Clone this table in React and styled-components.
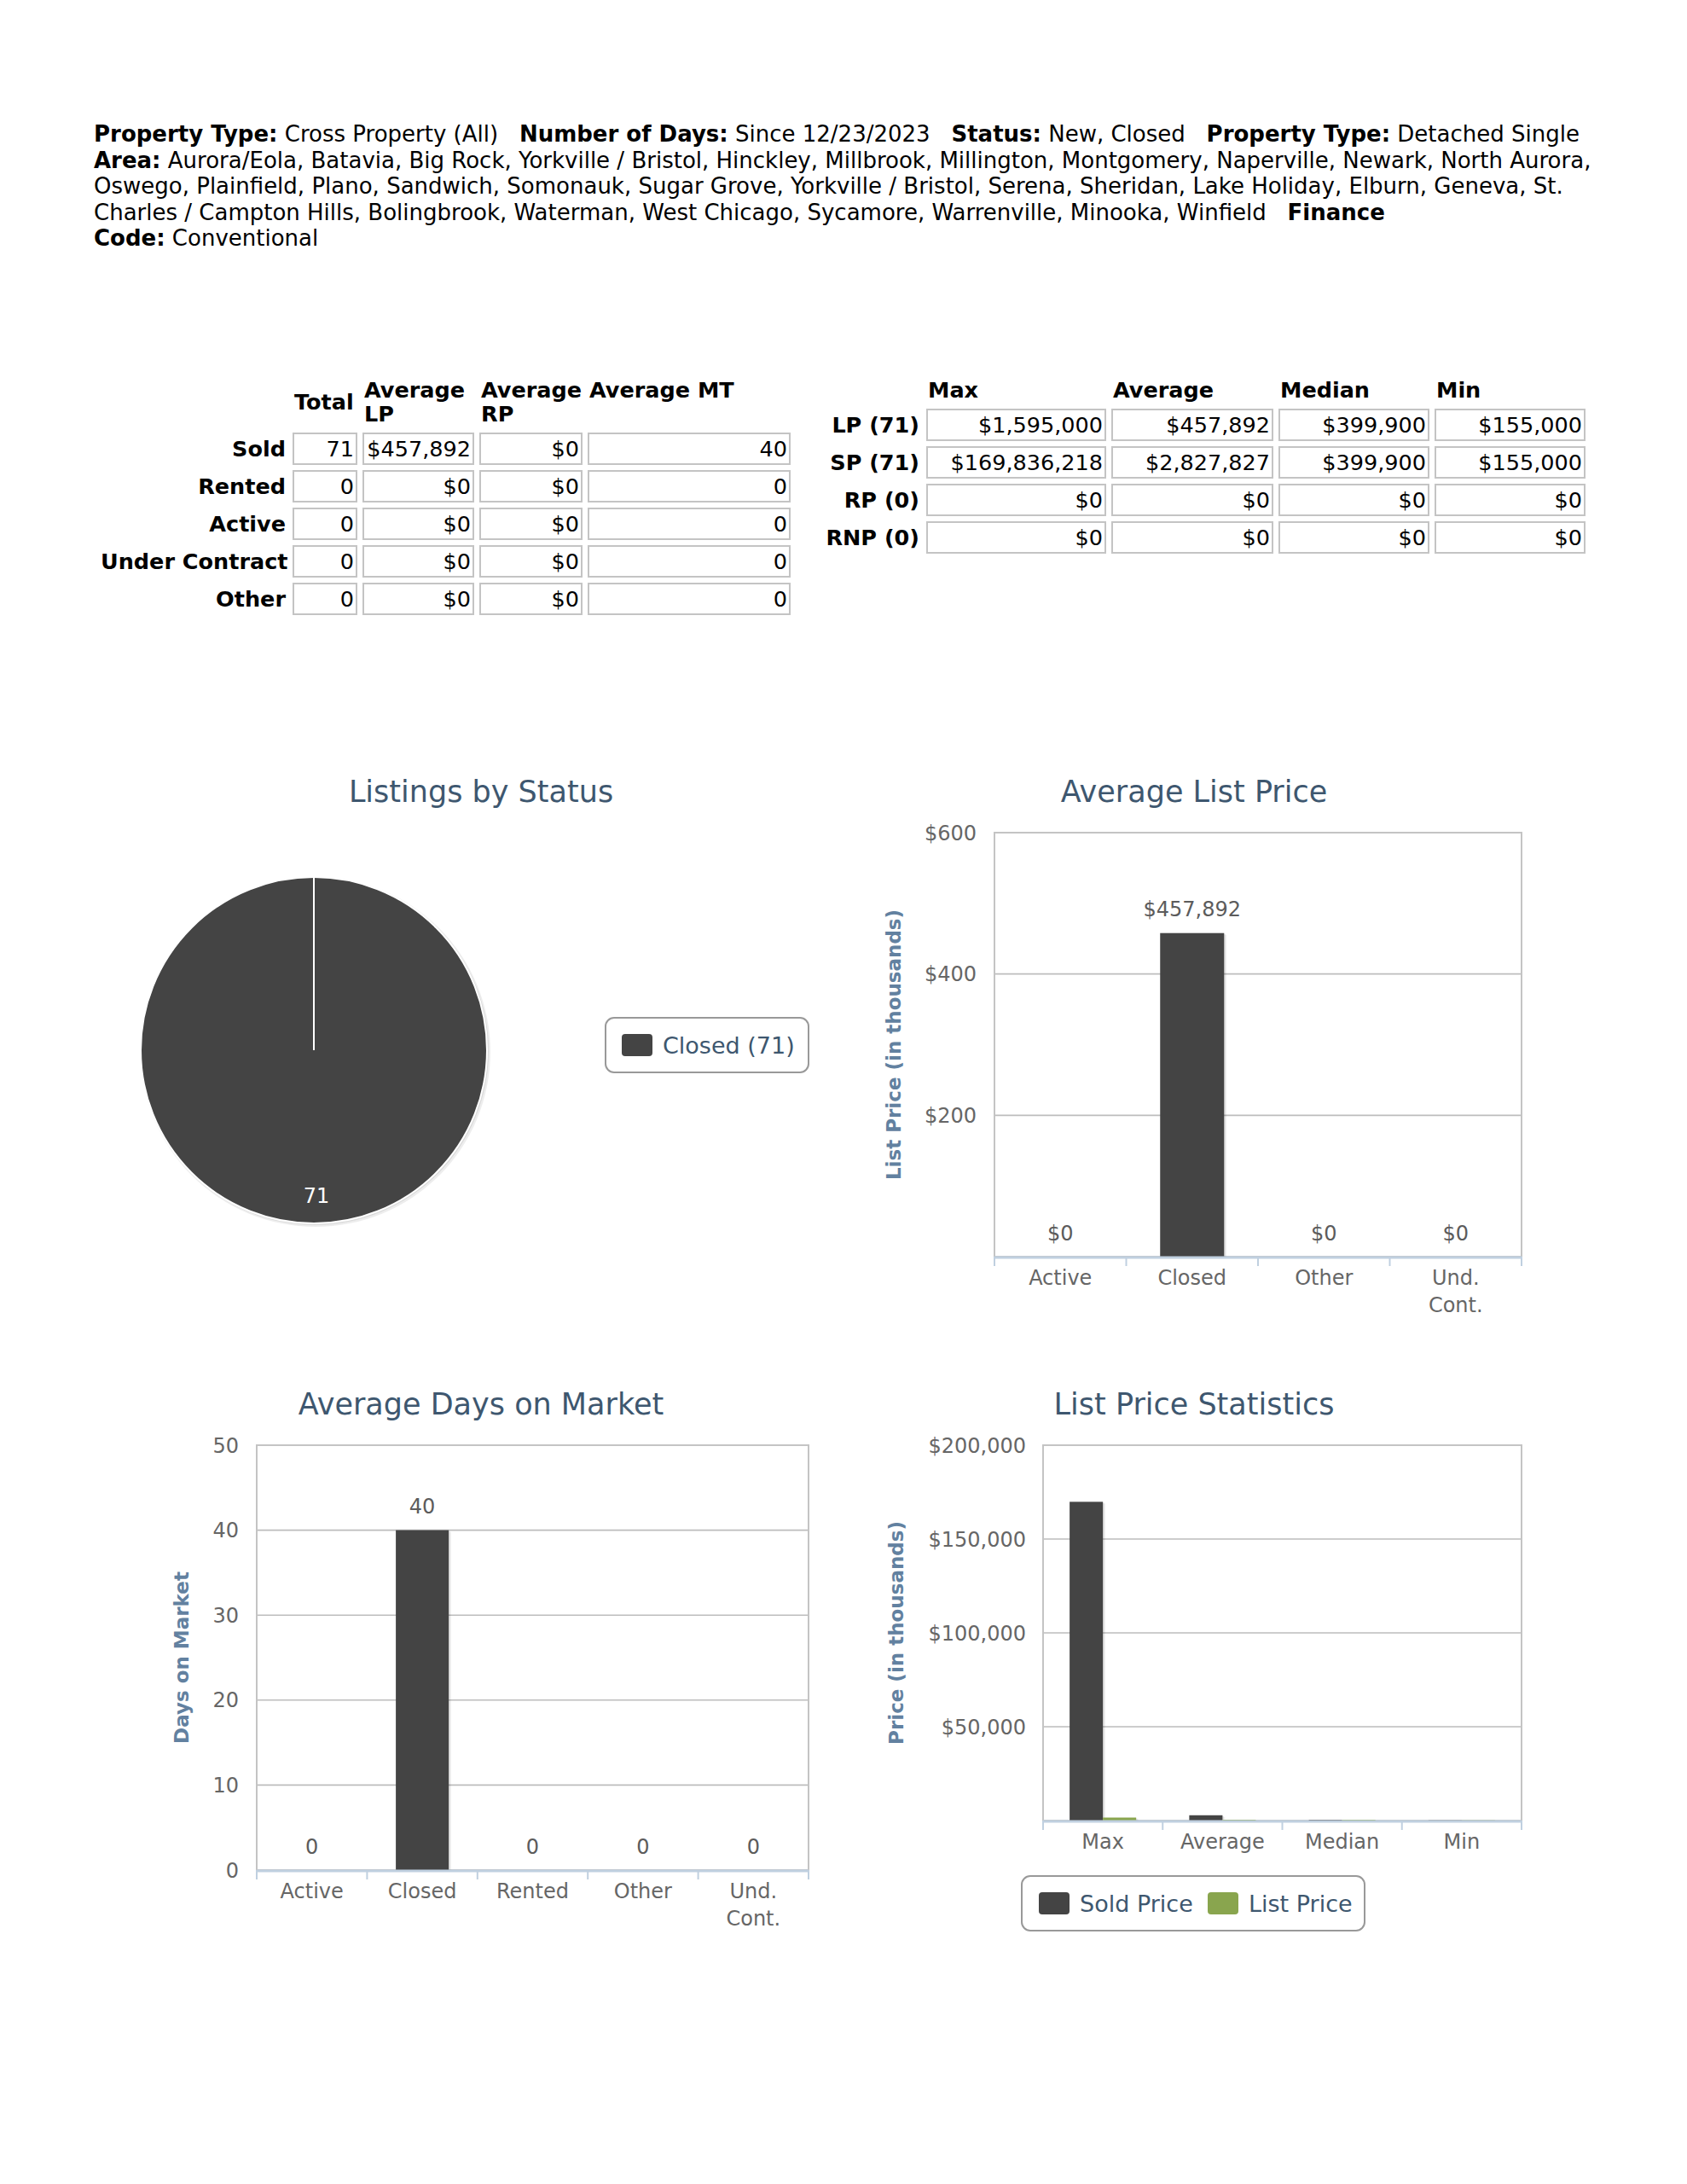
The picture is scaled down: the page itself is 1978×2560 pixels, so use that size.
import React from "react";
import styled, { createGlobalStyle } from "styled-components";

const GlobalStyle = createGlobalStyle`
  * { box-sizing: border-box; }
  html, body { margin: 0; padding: 0; background: #fff; }
  body { font-family: "DejaVu Sans", Verdana, sans-serif; color: #000; }
`;

const Page = styled.div`
  width: 1978px;
  min-height: 2560px;
  padding: 142px 0 0 110px;
`;

const Criteria = styled.p`
  margin: 0;
  width: 1762px;
  font-size: 26px;
  line-height: 30.5px;
`;

const Label = styled.b`
  font-weight: bold;
`;

const TablesRow = styled.div`
  display: flex;
  align-items: flex-start;
  gap: 17px;
  margin-top: 141px;
`;

const StatTable = styled.table`
  table-layout: fixed;
  border-collapse: separate;
  border-spacing: 6px;
  width: ${(p) => p.$width}px;
  font-size: 25.5px;
  line-height: 28px;
`;

const Col = styled.col`
  width: ${(p) => p.$w}px;
`;

const HeadCell = styled.th`
  padding: 1px 2px 2px;
  text-align: left;
  vertical-align: ${(p) => (p.$top ? "top" : "middle")};
  font-weight: bold;
`;

const RowLabel = styled.th`
  padding: 0 2px;
  text-align: right;
  vertical-align: middle;
  font-weight: bold;
  white-space: nowrap;
`;

const ValueCell = styled.td`
  height: 38px;
  padding: 3px 2px 3px 1px;
  border: 2px solid #c4c4c4;
  text-align: right;
  vertical-align: middle;
  white-space: nowrap;
`;

const ChartGrid = styled.div`
  display: grid;
  grid-template-columns: 840px 840px;
  grid-auto-rows: 718px;
  column-gap: 20px;
  margin: 153px 0 0 20px;
`;

const Svg = styled.svg`
  display: block;
  font-family: "DejaVu Sans", Verdana, sans-serif;
`;

const TitleText = styled.text`
  font-size: 35px;
  fill: #3e576f;
  text-anchor: middle;
`;

const AxisLabel = styled.text`
  font-size: 24px;
  fill: #666;
  text-anchor: ${(p) => p.$anchor || "middle"};
`;

const AxisTitle = styled.text`
  font-size: 23px;
  font-weight: bold;
  fill: #6281a0;
  text-anchor: middle;
`;

const DataLabel = styled.text`
  font-size: 24px;
  fill: ${(p) => p.$color || "#5c5c5c"};
  text-anchor: middle;
`;

const LegendText = styled.text`
  font-size: 27px;
  fill: #3e576f;
`;

const SEP = "\u00a0\u00a0 ";

const AREAS =
  "Aurora/Eola, Batavia, Big Rock, Yorkville / Bristol, Hinckley, Millbrook, Millington, Montgomery, Naperville, Newark, North Aurora, Oswego, Plainfield, Plano, Sandwich, Somonauk, Sugar Grove, Yorkville / Bristol, Serena, Sheridan, Lake Holiday, Elburn, Geneva, St. Charles / Campton Hills, Bolingbrook, Waterman, West Chicago, Sycamore, Warrenville, Minooka, Winfield";

const Field = ({ label, value }) => (
  <>
    <Label>{label}</Label>
    {"\u00a0" + value}
  </>
);

const statusRows = [
  ["Sold", "71", "$457,892", "$0", "40"],
  ["Rented", "0", "$0", "$0", "0"],
  ["Active", "0", "$0", "$0", "0"],
  ["Under Contract", "0", "$0", "$0", "0"],
  ["Other", "0", "$0", "$0", "0"],
];

const priceRows = [
  ["LP (71)", "$1,595,000", "$457,892", "$399,900", "$155,000"],
  ["SP (71)", "$169,836,218", "$2,827,827", "$399,900", "$155,000"],
  ["RP (0)", "$0", "$0", "$0", "$0"],
  ["RNP (0)", "$0", "$0", "$0", "$0"],
];

function Legend({ x, y, w, items }) {
  return (
    <g>
      <rect x={x} y={y} width={w} height={64} rx={10} fill="#fff" stroke="#999" strokeWidth="2" />
      {items.map((it) => (
        <g key={it.label}>
          <rect x={it.x} y={y + 19} width={36} height={26} rx={4} fill={it.color} />
          <LegendText x={it.x + 48} y={y + 42}>
            {it.label}
          </LegendText>
        </g>
      ))}
    </g>
  );
}

function PieChart() {
  const cx = 238;
  const cy = 351;
  const r = 203;
  return (
    <Svg width="840" height="718" viewBox="0 0 840 718">
      <TitleText x={434} y={60}>
        Listings by Status
      </TitleText>
      <circle cx={cx + 2} cy={cy + 2} r={r + 2} fill="#000" opacity="0.07" />
      <circle cx={cx + 1} cy={cy + 1} r={r + 1} fill="#000" opacity="0.08" />
      <circle cx={cx} cy={cy} r={r} fill="#444" stroke="#fff" strokeWidth="2" />
      <line x1={cx} y1={cy} x2={cx} y2={cy - r} stroke="#fff" strokeWidth="2" />
      <DataLabel $color="#fff" x={241} y={530}>
        71
      </DataLabel>
      <Legend x={580} y={313} w={238} items={[{ x: 599, color: "#444", label: "Closed (71)" }]} />
    </Svg>
  );
}

function BarChart({ title, titleX, plot, max, ticks, labelX, categories, series, barWidth, yTitle, yTitleX, legend }) {
  const catW = plot.w / categories.length;
  const bottom = plot.y + plot.h;
  const yOf = (v) => bottom - (v / max) * plot.h;
  const midY = plot.y + plot.h / 2;
  return (
    <Svg width="840" height="718" viewBox="0 0 840 718">
      <TitleText x={titleX} y={60}>
        {title}
      </TitleText>
      {ticks.map((t) => (
        <line key={t.v} x1={plot.x} x2={plot.x + plot.w} y1={yOf(t.v)} y2={yOf(t.v)} stroke="#bdbdbd" strokeWidth="1.6" />
      ))}
      <rect x={plot.x} y={plot.y} width={plot.w} height={plot.h} fill="none" stroke="#c4c4c4" strokeWidth="2" />
      {ticks
        .filter((t) => t.label)
        .map((t) => (
          <AxisLabel key={t.v} $anchor="end" x={labelX} y={yOf(t.v) + 8.5}>
            {t.label}
          </AxisLabel>
        ))}
      {series.map((s, j) =>
        s.values.map((v, i) => {
          const cx = plot.x + catW * (i + 0.5);
          const bx = cx - (series.length * barWidth) / 2 + j * barWidth;
          const top = yOf(v);
          const h = bottom - top;
          return (
            <g key={`${j}-${i}`}>
              {h > 0 && (
                <>
                  <rect x={bx + 3} y={top + 2} width={barWidth} height={Math.max(h - 2, 0)} fill="#000" opacity="0.05" />
                  <rect x={bx + 1.5} y={top + 1} width={barWidth} height={Math.max(h - 1, 0)} fill="#000" opacity="0.09" />
                  <rect x={bx} y={top} width={barWidth} height={h} fill={s.color} />
                </>
              )}
              {s.labels && (
                <DataLabel x={cx} y={top - 19.5}>
                  {s.labels[i]}
                </DataLabel>
              )}
            </g>
          );
        })
      )}
      <line x1={plot.x} x2={plot.x + plot.w} y1={bottom + 1} y2={bottom + 1} stroke="#c0d0e0" strokeWidth="3" />
      {categories.concat([null]).map((_, i) => (
        <line key={i} x1={plot.x + i * catW} x2={plot.x + i * catW} y1={bottom} y2={bottom + 11} stroke="#c0d0e0" strokeWidth="2" />
      ))}
      {categories.map((c, i) => {
        const lines = Array.isArray(c) ? c : [c];
        return lines.map((ln, k) => (
          <AxisLabel key={`${i}-${k}`} x={plot.x + catW * (i + 0.5)} y={bottom + 33 + k * 32}>
            {ln}
          </AxisLabel>
        ));
      })}
      <AxisTitle x={yTitleX} y={midY} transform={`rotate(-90 ${yTitleX} ${midY})`}>
        {yTitle}
      </AxisTitle>
      {legend && <Legend {...legend} />}
    </Svg>
  );
}

export default function App() {
  return (
    <Page>
      <GlobalStyle />
      <Criteria>
        <Field label="Property Type:" value="Cross Property (All)" />
        {SEP}
        <Field label="Number of Days:" value="Since 12/23/2023" />
        {SEP}
        <Field label="Status:" value="New, Closed" />
        {SEP}
        <Field label="Property Type:" value="Detached Single" />
        {SEP}
        <Field label="Area:" value={AREAS} />
        {SEP}
        <Label>Finance Code:</Label>
        {"\u00a0Conventional"}
      </Criteria>

      <TablesRow>
        <StatTable $width={823}>
          <colgroup>
            <Col $w={221} />
            <Col $w={76} />
            <Col $w={131} />
            <Col $w={121} />
            <Col $w={238} />
          </colgroup>
          <thead>
            <tr>
              <HeadCell />
              <HeadCell>Total</HeadCell>
              <HeadCell>Average LP</HeadCell>
              <HeadCell>Average RP</HeadCell>
              <HeadCell $top>Average MT</HeadCell>
            </tr>
          </thead>
          <tbody>
            {statusRows.map(([label, ...vals]) => (
              <tr key={label}>
                <RowLabel>{label}</RowLabel>
                {vals.map((v, i) => (
                  <ValueCell key={i}>{v}</ValueCell>
                ))}
              </tr>
            ))}
          </tbody>
        </StatTable>

        <StatTable $width={915}>
          <colgroup>
            <Col $w={124} />
            <Col $w={211} />
            <Col $w={190} />
            <Col $w={177} />
            <Col $w={177} />
          </colgroup>
          <thead>
            <tr>
              <HeadCell />
              <HeadCell>Max</HeadCell>
              <HeadCell>Average</HeadCell>
              <HeadCell>Median</HeadCell>
              <HeadCell>Min</HeadCell>
            </tr>
          </thead>
          <tbody>
            {priceRows.map(([label, ...vals]) => (
              <tr key={label}>
                <RowLabel>{label}</RowLabel>
                {vals.map((v, i) => (
                  <ValueCell key={i}>{v}</ValueCell>
                ))}
              </tr>
            ))}
          </tbody>
        </StatTable>
      </TablesRow>

      <ChartGrid>
        <PieChart />
        <BarChart
          title="Average List Price"
          titleX={410}
          plot={{ x: 176, y: 96, w: 618, h: 497 }}
          max={600}
          ticks={[
            { v: 200, label: "$200" },
            { v: 400, label: "$400" },
            { v: 600, label: "$600" },
          ]}
          labelX={155}
          categories={["Active", "Closed", "Other", ["Und.", "Cont."]]}
          series={[{ color: "#444", values: [0, 457.892, 0, 0], labels: ["$0", "$457,892", "$0", "$0"] }]}
          barWidth={75}
          yTitle="List Price (in thousands)"
          yTitleX={66}
        />
        <BarChart
          title="Average Days on Market"
          titleX={434}
          plot={{ x: 171, y: 96, w: 647, h: 498 }}
          max={50}
          ticks={[0, 10, 20, 30, 40, 50].map((v) => ({ v, label: String(v) }))}
          labelX={150}
          categories={["Active", "Closed", "Rented", "Other", ["Und.", "Cont."]]}
          series={[{ color: "#444", values: [0, 40, 0, 0, 0], labels: ["0", "40", "0", "0", "0"] }]}
          barWidth={62}
          yTitle="Days on Market"
          yTitleX={91}
        />
        <BarChart
          title="List Price Statistics"
          titleX={410}
          plot={{ x: 233, y: 96, w: 561, h: 440 }}
          max={200000}
          ticks={[
            { v: 50000, label: "$50,000" },
            { v: 100000, label: "$100,000" },
            { v: 150000, label: "$150,000" },
            { v: 200000, label: "$200,000" },
          ]}
          labelX={213}
          categories={["Max", "Average", "Median", "Min"]}
          series={[
            { color: "#444", values: [169836.218, 2827.827, 399.9, 155] },
            { color: "#89a54e", values: [1595, 457.892, 399.9, 155] },
          ]}
          barWidth={39}
          yTitle="Price (in thousands)"
          yTitleX={69}
          legend={{
            x: 208,
            y: 601,
            w: 402,
            items: [
              { x: 228, color: "#444", label: "Sold Price" },
              { x: 426, color: "#89a54e", label: "List Price" },
            ],
          }}
        />
      </ChartGrid>
    </Page>
  );
}
